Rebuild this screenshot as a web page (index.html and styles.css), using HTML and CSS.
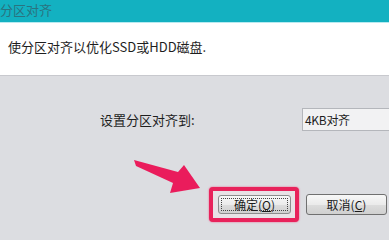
FILE: index.html
```html
<!DOCTYPE html>
<html lang="zh-CN">
<head>
<meta charset="utf-8">
<link rel="stylesheet" href="styles.css">
</head>
<body>
<div class="dialog">
  <div class="titlebar">分区对齐</div>
  <div class="header">使分区对齐以优化SSD或HDD磁盘.</div>
  <div class="content">
    <div class="row">
      <span class="label">设置分区对齐到:</span>
      <div class="select">4KB对齐</div>
    </div>
    <div class="buttons">
      <div class="highlight">
        <div class="btn ok"><span class="focus">确定(<u>O</u>)</span></div>
      </div>
      <div class="btn cancel">取消(<u>C</u>)</div>
    </div>
  </div>
  <svg class="arrow" width="389" height="228" viewBox="0 0 389 228">
    <defs>
      <filter id="soft" x="-10%" y="-10%" width="120%" height="120%">
        <feGaussianBlur stdDeviation="0.7"/>
      </filter>
    </defs>
    <polygon filter="url(#soft)" fill="#ea1f5c" points="134,160 178,172 184,165 200,188 170,193 173,183 136,166"/>
  </svg>
</div>
</body>
</html>
```

FILE: styles.css
```css
* { box-sizing: border-box; }
html, body { margin: 0; padding: 0; }
body {
  width: 389px;
  height: 228px;
  overflow: hidden;
  background: #dcdde1;
  font-family: "Noto Sans CJK SC", "Liberation Sans", sans-serif;
  color: #1e1e1e;
}
.dialog {
  position: relative;
  width: 389px;
  height: 228px;
  display: flex;
  flex-direction: column;
}
.titlebar {
  flex-shrink: 0;
  height: 23px;
  background: #13b1c1;
  color: #2a7380;
  font-size: 13px;
  line-height: 19px;
  border-bottom: 1px solid #b8eaf0;
}
.header {
  flex-shrink: 0;
  height: 53px;
  background: #ffffff;
  font-size: 13px;
  line-height: 18px;
  padding: 15px 0 0 8px;
  border-bottom: 1px solid #c8c9ce;
}
.content {
  flex: 1;
  display: flex;
  flex-direction: column;
  background: #dcdde1;
}
.row {
  display: flex;
  align-items: center;
  margin-top: 32px;
  height: 23px;
}
.label {
  flex-shrink: 0;
  margin-left: 100px;
  font-size: 13px;
  width: 202px;
}
.select {
  flex-shrink: 0;
  width: 100px;
  height: 23px;
  background: #f2f2f3;
  border: 1px solid #b4b6bb;
  border-right: none;
  font-size: 12px;
  line-height: 21px;
  padding-left: 2px;
  letter-spacing: -0.3px;
}
.buttons {
  display: flex;
  align-items: center;
  margin-top: 56px;
  margin-left: 209px;
  gap: 7px;
}
.highlight {
  flex-shrink: 0;
  border: 4px solid #e8225b;
  border-radius: 4px;
  padding: 4px 4px 4px 5px;
  background: #e8e2e6;
  box-shadow: 0 0 2px #f05080;
}
.btn {
  flex-shrink: 0;
  display: flex;
  align-items: center;
  justify-content: center;
  border: 1px solid #707070;
  border-radius: 3px;
  background: linear-gradient(#f7f7f7, #ebebeb 50%, #dddddd 51%, #d0d0d0);
  font-size: 12px;
  color: #1a1a1a;
}
.ok {
  width: 73px;
  height: 19px;
  border-color: #8c8c8c;
  padding: 2px;
}
.focus {
  flex: 1;
  height: 100%;
  display: flex;
  align-items: center;
  justify-content: center;
  border: 1px dotted #444;
  line-height: 1;
}
.cancel {
  width: 81px;
  height: 21px;
}
u { text-underline-offset: 1px; }
.arrow {
  position: absolute;
  left: 0;
  top: 0;
  pointer-events: none;
}
```
